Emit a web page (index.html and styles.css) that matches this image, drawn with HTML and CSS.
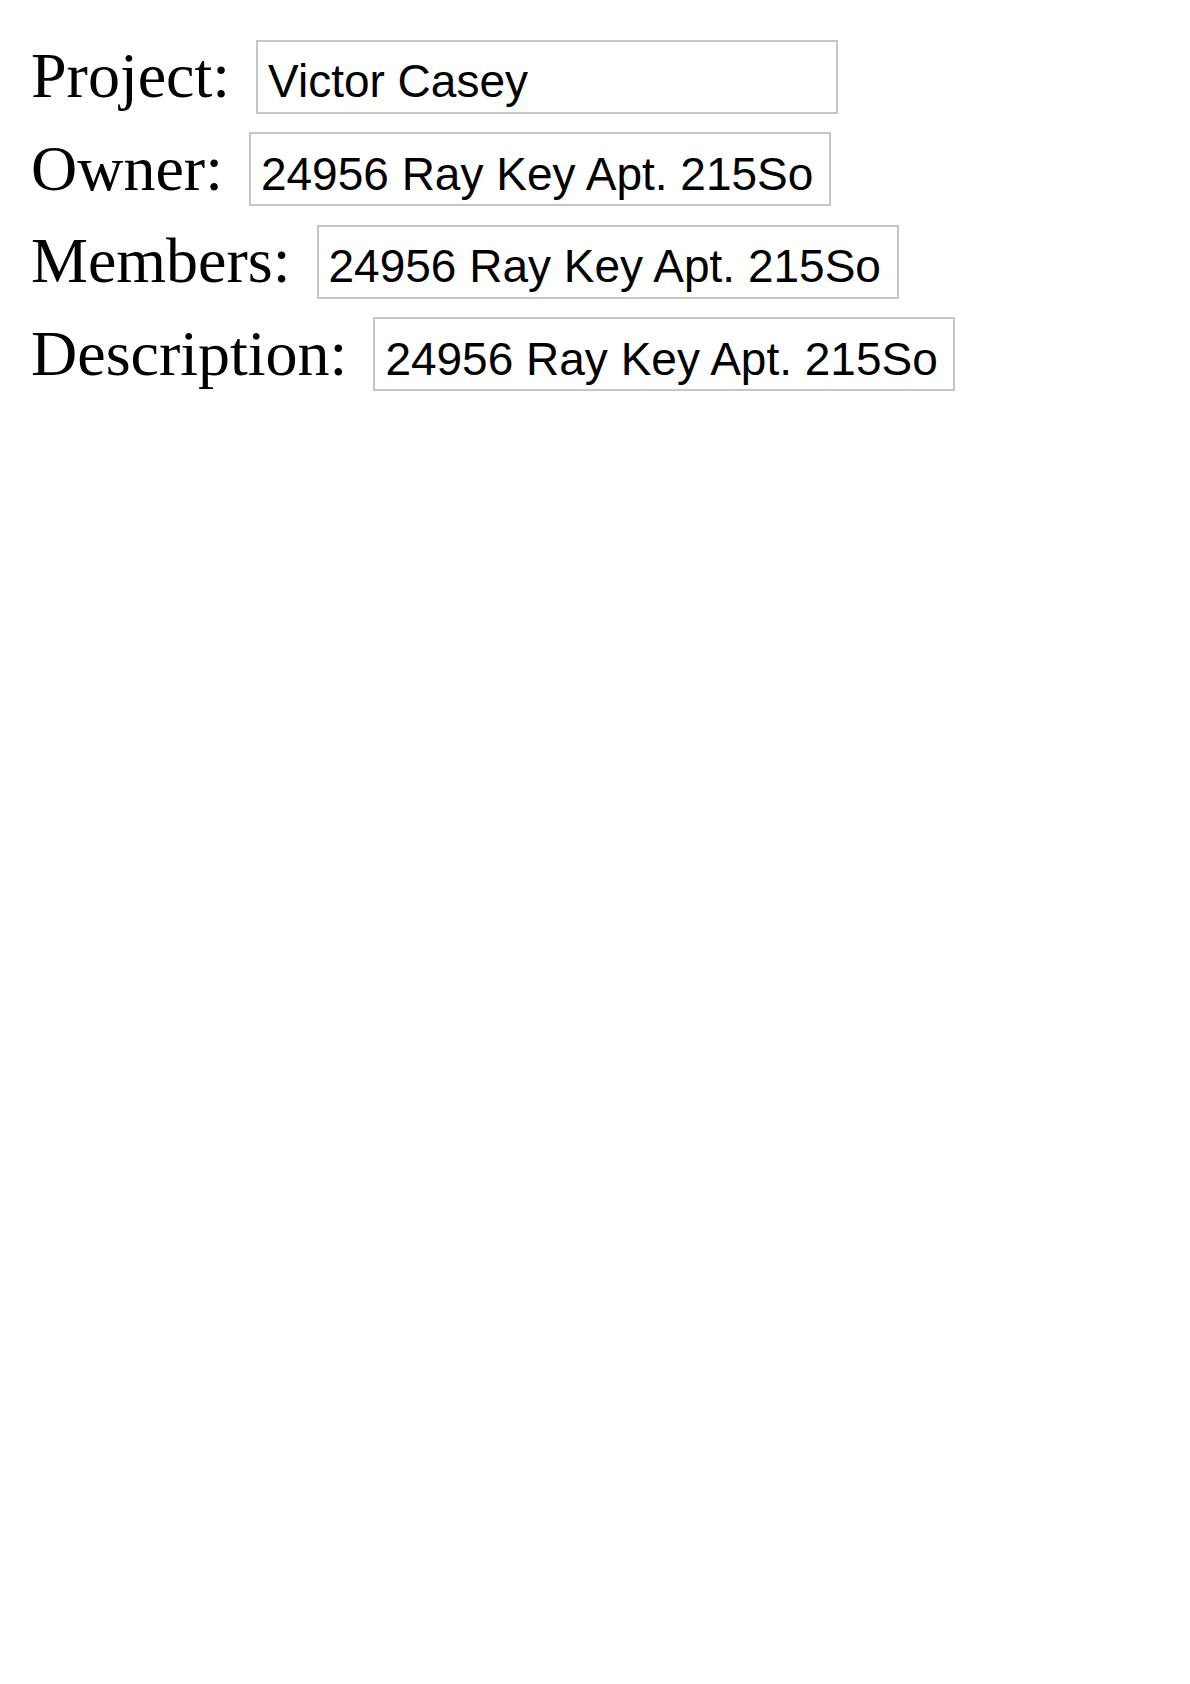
FILE: index.html
```html
<!DOCTYPE html>
<html lang="en">
<head>
<meta charset="utf-8">
<title>Project</title>
<link rel="stylesheet" href="styles.css">
</head>
<body>
<form class="form">
  <div class="row">
    <label class="label" for="project">Project:</label>
    <input class="field" id="project" type="text" value="Victor Casey">
  </div>
  <div class="row">
    <label class="label" for="owner">Owner:</label>
    <input class="field" id="owner" type="text" value="24956 Ray Key Apt. 215So">
  </div>
  <div class="row">
    <label class="label" for="members">Members:</label>
    <input class="field" id="members" type="text" value="24956 Ray Key Apt. 215So">
  </div>
  <div class="row">
    <label class="label" for="description">Description:</label>
    <input class="field" id="description" type="text" value="24956 Ray Key Apt. 215So">
  </div>
</form>
</body>
</html>
```
FILE: styles.css
```css
html, body {
  margin: 0;
  padding: 0;
  background: #ffffff;
}

.form {
  display: flex;
  flex-direction: column;
  gap: 18px;
  padding: 39px 0 0 31px;
  margin: 0;
}

.row {
  display: flex;
  align-items: baseline;
  gap: 26px;
}

.label {
  font-family: "Liberation Serif", "Times New Roman", serif;
  font-size: 64px;
  line-height: normal;
  color: #000000;
}

.field {
  box-sizing: border-box;
  width: 582px;
  height: 74px;
  margin: 0;
  padding: 9px 10px 0 10px;
  border: 2px solid #c6c6c6;
  border-radius: 0;
  background: #ffffff;
  font-family: "Liberation Sans", Arial, sans-serif;
  font-size: 46px;
  color: #000000;
  outline: none;
}
```
